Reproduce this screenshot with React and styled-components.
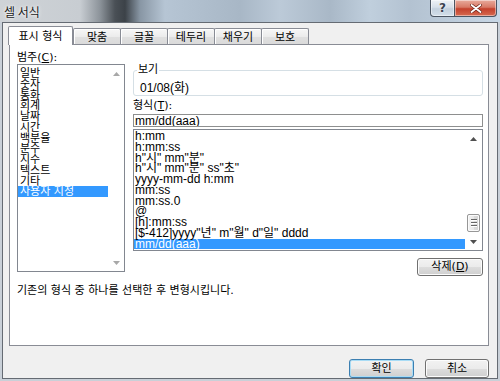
import React from 'react'
import styled, { createGlobalStyle } from 'styled-components'

const GlobalStyle = createGlobalStyle`
  html, body {
    margin: 0;
    padding: 0;
    background: #fff;
  }
  body {
    font-family: "DejaVu Sans", "Noto Sans CJK KR", sans-serif;
    font-size: 11px;
    color: #000;
  }
  * {
    box-sizing: border-box;
  }
`

const latin = `
  font-family: "Liberation Sans", "Noto Sans CJK KR", sans-serif;
  font-size: 12px;
`

const Window = styled.div`
  width: 500px;
  height: 381px;
  display: flex;
  flex-direction: column;
  background: #c9d0d8;
  overflow: hidden;
`

const TitleBar = styled.div`
  height: 22px;
  flex: none;
  display: flex;
  align-items: flex-start;
  justify-content: space-between;
  padding-right: 3px;
  background: linear-gradient(
    90deg,
    #cfd3d7 0%,
    #c8cdd2 16%,
    #8c939a 20%,
    #4a5056 23%,
    #3c4248 25%,
    #8896a4 28%,
    #b6c5d4 33%,
    #a8b7c6 48%,
    #bccad8 56%,
    #a9b8c7 66%,
    #c0cfdd 74%,
    #b3c2d1 82%,
    #c8d7e5 100%
  );
`

const Title = styled.span`
  font-family: "Noto Sans CJK KR", sans-serif;
  font-size: 12px;
  line-height: 14px;
  padding: 5px 0 0 4px;
  color: #1a1a1a;
  text-shadow: 0 0 4px #fff, 0 0 2px #fff;
`

const Caption = styled.div`
  display: flex;
`

const CaptionButton = styled.div`
  width: ${p => (p.$close ? 42 : 25)}px;
  height: 17px;
  display: flex;
  align-items: center;
  justify-content: center;
  border: 1px solid #4b5562;
  border-top: none;
  border-left: ${p => (p.$close ? 'none' : '1px solid #4b5562')};
  border-radius: ${p => (p.$close ? '0 0 4px 0' : '0 0 0 4px')};
  background: ${p =>
    p.$close
      ? 'linear-gradient(#e8ab9c, #d87a66 45%, #c4412c 55%, #d66a50)'
      : 'linear-gradient(#eef2f6, #d7e0e9 45%, #c3d0dd 55%, #d3dfea)'};
  box-shadow: inset 0 0 0 1px rgba(255, 255, 255, 0.45);
  font-family: "DejaVu Sans", sans-serif;
  font-size: 12px;
  font-weight: bold;
  color: #3a4350;
  text-shadow: 0 0 2px #fff;
`

const Client = styled.div`
  flex: 1;
  margin: 0 2px 2px 2px;
  border: 1px solid #656b73;
  background: #f0f0f0;
  display: flex;
  flex-direction: column;
  padding: 3px 8px 0 6px;
`

const TabRow = styled.div`
  height: 18px;
  flex: none;
  display: flex;
  align-items: flex-end;
  position: relative;
  z-index: 1;
`

const Tab = styled.div`
  height: ${p => (p.$active ? 19 : 16)}px;
  width: ${p => (p.$active ? 65 : 48)}px;
  margin-left: ${p => (p.$active ? -1 : p.$first ? 0 : -1)}px;
  margin-bottom: ${p => (p.$active ? -1 : 0)}px;
  padding-top: ${p => (p.$active ? 4 : 3)}px;
  border: 1px solid #898c95;
  border-bottom: none;
  border-radius: 2px 2px 0 0;
  background: ${p =>
    p.$active ? '#fff' : 'linear-gradient(#f7f7f7, #ececec 50%, #e0e0e0 51%, #dadada)'};
  box-shadow: ${p => (p.$active ? 'none' : 'inset 1px 1px 0 #fff')};
  text-align: center;
  line-height: 12px;
  white-space: nowrap;
  position: relative;
  z-index: ${p => (p.$active ? 2 : 1)};
`

const Panel = styled.div`
  height: 302px;
  flex: none;
  border: 1px solid #898c95;
  background: #fff;
  padding: 7px 5px 0 7px;
  display: flex;
  flex-direction: column;
`

const Columns = styled.div`
  display: grid;
  grid-template-columns: 108px 1fr;
  column-gap: 8px;
  align-items: start;
`

const Column = styled.div`
  display: flex;
  flex-direction: column;
  padding-top: ${p => p.$offset || 0}px;
`

const Label = styled.div`
  line-height: 12px;
  height: 12px;
  margin-top: ${p => p.$gap || 0}px;
  white-space: nowrap;
`

const Key = styled.span`
  text-decoration: underline;
`

const ListBox = styled.div`
  height: ${p => p.$height}px;
  margin-top: ${p => p.$gap || 0}px;
  display: flex;
  border: 1px solid #828790;
  background: #fff;
  overflow: hidden;
  ${p => (p.$latin ? latin : '')}
`

const Items = styled.div`
  flex: 1;
  min-width: 0;
  padding-top: ${p => p.$top || 0}px;
  overflow: hidden;
`

const Item = styled.div`
  height: 10.75px;
  line-height: 11px;
  padding-left: ${p => p.$indent}px;
  white-space: nowrap;
  background: ${p => (p.$selected ? '#3399ff' : 'transparent')};
  color: ${p => (p.$selected ? '#fff' : '#000')};
`

const ScrollBar = styled.div`
  width: ${p => p.$width}px;
  flex: none;
  display: flex;
  flex-direction: column;
  background: #fff;
`

const ArrowButton = styled.div`
  height: 17px;
  flex: none;
  display: flex;
  align-items: center;
  justify-content: center;
`

const Track = styled.div`
  flex: 1;
  display: flex;
  flex-direction: column;
  justify-content: flex-end;
  padding: 0 2px 1px 2px;
`

const Thumb = styled.div`
  height: 18px;
  border: 1px solid #979797;
  border-radius: 2px;
  background: linear-gradient(90deg, #f3f3f3, #e8e8e8 50%, #dcdcdc 51%, #d4d4d4);
  box-shadow: inset 0 0 0 1px #fbfbfb;
  display: flex;
  flex-direction: column;
  align-items: center;
  justify-content: center;
  gap: 1px;
`

const Grip = styled.span`
  width: 6px;
  height: 1px;
  background: #666;
  box-shadow: 0 1px 0 #fff;
  margin-bottom: 1px;
`

const GroupBox = styled.fieldset`
  margin: 0;
  padding: 0 6px 1px 3px;
  min-inline-size: 0;
  border: 1px solid #d5dfe5;
  border-radius: 3px;
`

const Legend = styled.legend`
  padding: 0 1px;
  line-height: 12px;
  height: 12px;
`

const Preview = styled.div`
  ${latin}
  line-height: 12px;
  margin: 6px 0 0 3px;
`

const TextInput = styled.input`
  height: 13px;
  margin-top: 2px;
  padding: 0 1px;
  border: 1px solid #8e8f8f;
  font: inherit;
  ${latin}
  line-height: 11px;
  color: #000;
  background: #fff;
  outline: none;
`

const Button = styled.div`
  width: ${p => p.$width}px;
  height: ${p => p.$height}px;
  margin-top: ${p => p.$gap || 0}px;
  align-self: flex-end;
  display: flex;
  align-items: center;
  justify-content: center;
  border: 1px solid ${p => (p.$default ? '#3c7fb1' : '#707070')};
  border-radius: 3px;
  background: linear-gradient(#f2f2f2, #ebebeb 50%, #dddddd 51%, #cfcfcf);
  box-shadow: ${p => (p.$default ? 'inset 0 0 0 1px #a9dcf5' : 'inset 0 0 0 1px #fcfcfc')};
  line-height: 12px;
  white-space: nowrap;
`

const Note = styled.div`
  margin-top: 9px;
  line-height: 12px;
  white-space: nowrap;
`

const Footer = styled.div`
  flex: 1;
  display: flex;
  justify-content: flex-end;
  align-items: flex-start;
  gap: 11px;
  padding-top: 8px;
`

const Arrow = ({ down, color }) => (
  <svg width="7" height="4" viewBox="0 0 7 4">
    <path d={down ? 'M0 0 L7 0 L3.5 4 Z' : 'M0 4 L7 4 L3.5 0 Z'} fill={color} />
  </svg>
)

const tabs = ['표시 형식', '맞춤', '글꼴', '테두리', '채우기', '보호']

const categories = [
  '일반', '숫자', '통화', '회계', '날짜', '시간',
  '백분율', '분수', '지수', '텍스트', '기타', '사용자 지정',
]

const formats = [
  'h:mm',
  'h:mm:ss',
  'h"시" mm"분"',
  'h"시" mm"분" ss"초"',
  'yyyy-mm-dd h:mm',
  'mm:ss',
  'mm:ss.0',
  '@',
  '[h]:mm:ss',
  '[$-412]yyyy"년" m"월" d"일" dddd',
  'mm/dd(aaa)',
]

const App = () => (
  <>
    <GlobalStyle />
    <Window>
      <TitleBar>
        <Title>셀 서식</Title>
        <Caption>
          <CaptionButton>?</CaptionButton>
          <CaptionButton $close>
            <svg width="12" height="9" viewBox="0 0 12 9">
              <path d="M1.5 1 L10.5 8 M10.5 1 L1.5 8" stroke="#6b2418" strokeWidth="3.2" strokeLinecap="round" />
              <path d="M1.5 1 L10.5 8 M10.5 1 L1.5 8" stroke="#fff" strokeWidth="1.8" strokeLinecap="round" />
            </svg>
          </CaptionButton>
        </Caption>
      </TitleBar>
      <Client>
        <TabRow>
          {tabs.map((t, i) => (
            <Tab key={t} $active={i === 0} $first={i === 1}>
              {t}
            </Tab>
          ))}
        </TabRow>
        <Panel>
          <Columns>
            <Column>
              <Label>
                범주(<Key>C</Key>):
              </Label>
              <ListBox $height={208}>
                <Items $top={3}>
                  {categories.map((c, i) => (
                    <Item key={c} $indent={2} $selected={i === categories.length - 1}>
                      {c}
                    </Item>
                  ))}
                </Items>
                <ScrollBar $width={16}>
                  <ArrowButton>
                    <Arrow color="#a8a8a8" />
                  </ArrowButton>
                  <Track />
                  <ArrowButton>
                    <Arrow down color="#a8a8a8" />
                  </ArrowButton>
                </ScrollBar>
              </ListBox>
            </Column>
            <Column $offset={12}>
              <GroupBox>
                <Legend>보기</Legend>
                <Preview>01/08(화)</Preview>
              </GroupBox>
              <Label $gap={4}>
                형식(<Key>T</Key>):
              </Label>
              <TextInput readOnly value="mm/dd(aaa)" />
              <ListBox $height={122} $gap={2} $latin>
                <Items $top={1}>
                  {formats.map((f, i) => (
                    <Item key={f} $indent={1} $selected={i === formats.length - 1}>
                      {f}
                    </Item>
                  ))}
                </Items>
                <ScrollBar $width={17}>
                  <ArrowButton>
                    <Arrow color="#505050" />
                  </ArrowButton>
                  <Track>
                    <Thumb>
                      <Grip />
                      <Grip />
                      <Grip />
                    </Thumb>
                  </Track>
                  <ArrowButton>
                    <Arrow down color="#505050" />
                  </ArrowButton>
                </ScrollBar>
              </ListBox>
              <Button $width={66} $height={18} $gap={7}>
                삭제(<Key>D</Key>)
              </Button>
            </Column>
          </Columns>
          <Note>기존의 형식 중 하나를 선택한 후 변형시킵니다.</Note>
        </Panel>
        <Footer>
          <Button $width={65} $height={19} $default>
            확인
          </Button>
          <Button $width={64} $height={19}>
            취소
          </Button>
        </Footer>
      </Client>
    </Window>
  </>
)

export default App
